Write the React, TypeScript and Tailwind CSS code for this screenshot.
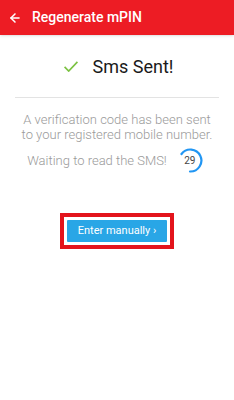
import { ArrowLeft } from "lucide-react";

function Spinner({ value }: { value: number }) {
  // arc from ~10 o'clock clockwise round to ~6 o'clock
  return (
    <div className="relative h-[25px] w-[26px]">
      <svg viewBox="0 0 26 25" className="absolute inset-0 h-full w-full">
        <path
          d="M4.5 6 A11 11 0 1 1 13 23.5"
          fill="none"
          stroke="#2196f3"
          strokeWidth="2.2"
          strokeLinecap="round"
        />
      </svg>
      <span className="absolute inset-0 flex items-center justify-center text-[10px] text-[#444]">
        {value}
      </span>
    </div>
  );
}

export default function App() {
  return (
    <div
      className="h-[400px] w-[234px] bg-white"
      style={{ fontFamily: "Roboto, 'Liberation Sans', sans-serif" }}
    >
      <header className="flex h-[35px] items-center gap-[10px] bg-[#ed1c24] pl-[8px] shadow-sm">
        <ArrowLeft className="h-[14px] w-[14px] text-white" strokeWidth={2.6} />
        <h1 className="text-[14px] font-medium text-white">Regenerate mPIN</h1>
      </header>

      <div className="flex h-[62px] items-center justify-center gap-[14px] pl-[2px]">
        <svg viewBox="0 0 16 12" className="h-[11px] w-[16px]">
          <path d="M1 6.5 L5.5 11 L15 1" fill="none" stroke="#7cc243" strokeWidth="1.8" />
        </svg>
        <span className="text-[18px] text-[#1a1a1a]">Sms Sent!</span>
      </div>

      <div className="mx-[15px] h-px bg-[#e3e3e3]" />

      <p className="mt-[14px] text-center text-[13px] leading-[15px] font-light text-[#9a9a9a]">
        A verification code has been sent
        <br />
        to your registered mobile number.
      </p>

      <div className="mt-[6px] flex items-center justify-center gap-[10px] pr-[4px]">
        <span className="text-[13px] font-light text-[#9a9a9a]">Waiting to read the SMS!</span>
        <Spinner value={29} />
      </div>

      <div className="mt-[40px] flex justify-center">
        <div className="border-[4px] border-[#e3141c] p-[3px]">
          <button className="flex h-[22px] w-[100px] items-center justify-center rounded-[1px] bg-[#29a6e6] text-[11px] text-white">
            Enter manually ›
          </button>
        </div>
      </div>
    </div>
  );
}
